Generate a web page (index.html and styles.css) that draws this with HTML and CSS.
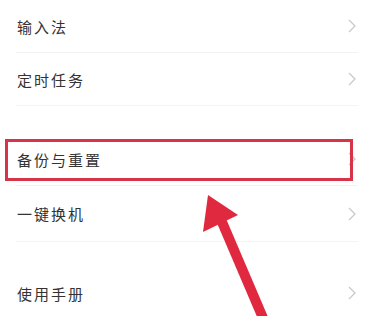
FILE: index.html
```html
<!DOCTYPE html>
<html lang="zh">
<head>
<meta charset="utf-8">
<link rel="stylesheet" href="styles.css">
</head>
<body>
<div class="page">
  <div class="group">
    <div class="row"><span class="label">输入法</span><svg class="chev" viewBox="0 0 8 14"><polyline points="1,1 7,7 1,13"/></svg></div>
    <div class="row"><span class="label">定时任务</span><svg class="chev" viewBox="0 0 8 14"><polyline points="1,1 7,7 1,13"/></svg></div>
  </div>
  <div class="group">
    <div class="row"><span class="label">备份与重置</span><svg class="chev" viewBox="0 0 8 14"><polyline points="1,1 7,7 1,13"/></svg></div>
    <div class="row tall"><span class="label">一键换机</span><svg class="chev" viewBox="0 0 8 14"><polyline points="1,1 7,7 1,13"/></svg></div>
  </div>
  <div class="group">
    <div class="row"><span class="label">使用手册</span><svg class="chev" viewBox="0 0 8 14"><polyline points="1,1 7,7 1,13"/></svg></div>
  </div>
  <div class="highlight"></div>
  <svg class="arrow" viewBox="0 0 374 316">
    <line x1="222" y1="222" x2="263" y2="318" />
    <polygon points="208,195 203,232 238,215" />
  </svg>
</div>
</body>
</html>
```
FILE: styles.css
```css
html, body {
  margin: 0;
  padding: 0;
  background: #fff;
}
.page {
  position: relative;
  width: 374px;
  height: 316px;
  overflow: hidden;
  font-family: "Noto Sans CJK SC", "Noto Sans", sans-serif;
}
.group {
  display: flex;
  flex-direction: column;
  margin-bottom: 27px;
}
.group:first-child {
  margin-bottom: 27px;
}
.row {
  height: 52px;
  margin: 0 16px;
  border-bottom: 1px solid #f2f2f2;
  display: flex;
  align-items: center;
  justify-content: space-between;
}
.row.tall {
  height: 55px;
}
.group .row:last-child {
  border-bottom: 1px solid #f4f4f4;
}
.group:nth-child(2) {
  margin-bottom: 25px;
}
.label {
  font-size: 15px;
  letter-spacing: 2px;
  color: #333;
  padding-left: 1px;
}
.chev {
  width: 8px;
  height: 14px;
  margin-right: 2px;
  fill: none;
  stroke: #c9c9c9;
  stroke-width: 1.3;
}
.highlight {
  position: absolute;
  left: 5px;
  top: 139px;
  width: 342px;
  height: 36px;
  border: 3px solid #d7344a;
}
.arrow {
  position: absolute;
  left: 0;
  top: 0;
  width: 374px;
  height: 316px;
}
.arrow line {
  stroke: #e0283f;
  stroke-width: 10;
}
.arrow polygon {
  fill: #e0283f;
}
```
